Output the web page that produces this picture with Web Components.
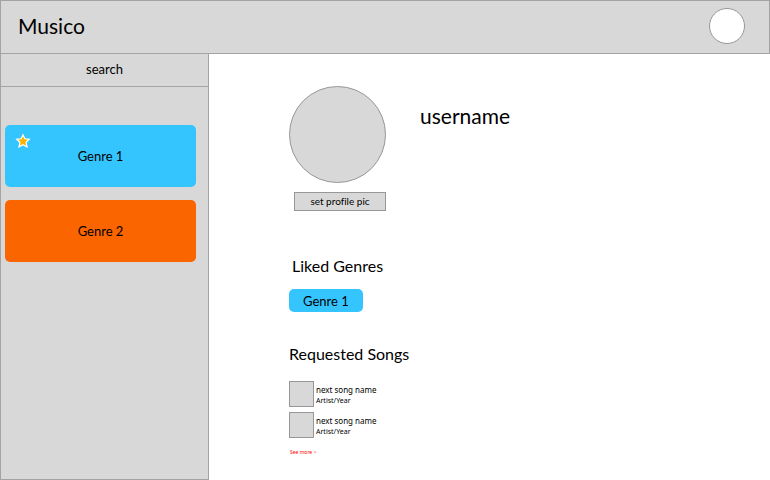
<!DOCTYPE html>
<html lang="en">
<head>
<meta charset="utf-8">
<meta name="viewport" content="width=device-width, initial-scale=1">
<title>Musico</title>
<style>
  html { --panel: #d8d8d8; --line: #a3a3a3; --blue: #34c5ff; --orange: #fb6500; }
  body { margin: 0; background: #fff; color: #000; font-family: Lato, "Noto Sans", sans-serif; font-variant-ligatures: none; }
</style>
</head>
<body>
<musico-app></musico-app>
<script>
function define(name, html) {
  const template = document.createElement('template');
  template.innerHTML = '<style>*{box-sizing:border-box}:host{box-sizing:border-box}button,input{font-family:inherit;font-variant-ligatures:none;color:inherit;margin:0}</style>' + html;
  customElements.define(name, class extends HTMLElement {
    constructor() {
      super();
      this.attachShadow({ mode: 'open' }).append(template.content.cloneNode(true));
    }
  });
}

define('app-header', `
  <style>
    :host { display: flex; align-items: center; justify-content: space-between; height: 54px; padding: 0 24px 2px 17px; background: var(--panel); border: 1px solid var(--line); }
    .brand { font-size: 21px; line-height: 26px; }
    button { width: 36px; height: 36px; padding: 0; border: 1px solid #979797; border-radius: 50%; background: #fff; }
  </style>
  <div class="brand"><slot></slot></div>
  <button type="button" aria-label="Account"></button>`);

define('search-box', `
  <style>
    :host { display: block; }
    input { display: block; width: 100%; height: 33px; padding: 0 0 2px; border: 1px solid var(--line); border-top: 0; border-radius: 0; background: var(--panel); font-size: 13px; text-align: center; }
    input::placeholder { color: #000; opacity: 1; }
  </style>
  <input type="text" placeholder="search" aria-label="search">`);

define('star-icon', `
  <style>:host { display: block; } svg { display: block; width: 16px; height: 16px; }</style>
  <svg viewBox="0 0 16 16" aria-hidden="true"><path d="M8 1.8 9.9 5.8 14.3 6.3 11.1 9.3 12 13.8 8 11.6 4 13.8 4.9 9.3 1.7 6.3 6.1 5.8Z" fill="#f7b500" stroke="#fff" stroke-width="1.2"/></svg>`);

define('genre-card', `
  <style>
    :host { display: block; position: relative; }
    button { display: block; width: 100%; height: 62px; padding: 0; border: 0; border-radius: 5px; background: var(--blue); font-size: 13px; line-height: 16px; }
    :host([color="orange"]) button { background: var(--orange); }
    ::slotted(star-icon) { position: absolute; top: 8px; left: 10px; }
  </style>
  <button type="button"><slot></slot></button><slot name="badge"></slot>`);

define('side-bar', `
  <style>
    :host { display: block; background: var(--panel); }
    nav { display: grid; gap: 13px; padding: 38px 12px 20px 4px; border: solid var(--line); border-width: 0 1px 1px; min-height: calc(100vh - 87px); align-content: start; }
  </style>
  <search-box></search-box>
  <nav aria-label="Genres"><slot></slot></nav>`);

define('user-profile', `
  <style>
    :host { display: flex; gap: 34px; }
    .picture { display: flex; flex-direction: column; align-items: flex-end; gap: 9px; }
    .avatar { width: 97px; height: 97px; border: 1px solid #979797; border-radius: 50%; background: var(--panel); }
    button { width: 92px; height: 19px; padding: 0 0 2px; border: 1px solid #979797; background: var(--panel); font-size: 10px; line-height: 12px; }
    h1 { margin: 17px 0 0; font-size: 21px; line-height: 26px; font-weight: 400; }
  </style>
  <div class="picture"><div class="avatar"></div><button type="button">set profile pic</button></div>
  <h1><slot></slot></h1>`);

define('genre-pill', `
  <style>
    :host { display: block; }
    button { display: block; height: 23px; padding: 0 14px; border: 0; border-radius: 5px; background: var(--blue); font-size: 13px; line-height: 16px; }
  </style>
  <button type="button"><slot></slot></button>`);

define('page-section', `
  <style>
    :host { display: block; }
    h2 { margin: 0; font-size: 16px; line-height: 20px; font-weight: 400; }
    :host([inset]) h2 { padding-left: 3px; }
    .content { display: grid; gap: 5px; justify-items: start; margin-top: var(--content-gap, 13px); }
  </style>
  <h2><slot name="title"></slot></h2>
  <div class="content"><slot></slot></div>`);

define('song-item', `
  <style>
    :host { display: flex; gap: 2px; font-family: "Noto Sans", sans-serif; }
    .cover { width: 25px; height: 26px; border: 1px solid #979797; background: var(--panel); }
    .text { display: grid; align-content: start; padding-top: 3px; }
    .name { font-size: 8px; line-height: 12px; }
    .artist { font-size: 7px; line-height: 10px; }
  </style>
  <div class="cover"></div>
  <div class="text"><div class="name"><slot></slot></div><div class="artist"><slot name="artist"></slot></div></div>`);

define('more-link', `
  <style>
    :host { display: block; padding: 5px 0 0 1px; font-family: "Noto Sans", sans-serif; }
    a { display: block; color: #f00; text-decoration: none; font-size: 5px; line-height: 8px; }
  </style>
  <a href="#"><slot></slot></a>`);

define('musico-app', `
  <style>
    :host { display: block; min-height: 100vh; }
    .body { display: grid; grid-template-columns: 209px minmax(0, 1fr); min-height: calc(100vh - 54px); }
    main { padding: 32px 24px 20px 80px; }
    .liked { margin-top: 45px; }
    .songs { margin-top: 32px; --content-gap: 17px; }
  </style>
  <app-header>Musico</app-header>
  <div class="body">
    <side-bar>
      <genre-card>Genre 1<star-icon slot="badge"></star-icon></genre-card>
      <genre-card color="orange">Genre 2</genre-card>
    </side-bar>
    <main>
      <user-profile>username</user-profile>
      <page-section class="liked" inset><span slot="title">Liked Genres</span><genre-pill>Genre 1</genre-pill></page-section>
      <page-section class="songs"><span slot="title">Requested Songs</span>
        <song-item>next song name<span slot="artist">Artist/Year</span></song-item>
        <song-item>next song name<span slot="artist">Artist/Year</span></song-item>
        <more-link>See more &gt;</more-link>
      </page-section>
    </main>
  </div>`);
</script>
</body>
</html>
